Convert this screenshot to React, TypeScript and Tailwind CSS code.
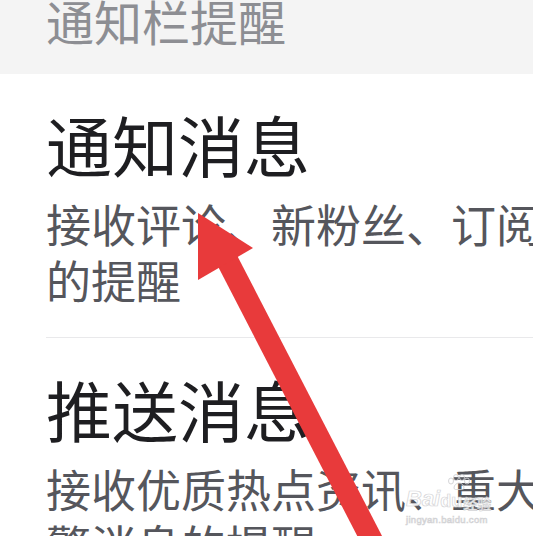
const font = { fontFamily: '"Noto Sans CJK SC", "Noto Sans", sans-serif' };
const latin = { fontFamily: '"Liberation Sans", Arial, sans-serif' };

function Item({ title, lines }: { title: string; lines: string[] }) {
  return (
    <div className="pl-[46px]">
      <div className="text-[66px] leading-none text-[#1e1e21] whitespace-nowrap">{title}</div>
      <div className="mt-[20px] text-[45px] leading-[56px] text-[#55565c]">
        {lines.map((l, i) => (
          <div key={i} className="whitespace-nowrap">
            {l}
          </div>
        ))}
      </div>
    </div>
  );
}

export default function App() {
  return (
    <div className="relative w-[533px] h-[536px] overflow-hidden bg-white" style={font}>
      <div className="h-[74px] bg-[#f4f4f4] pl-[46px] overflow-hidden">
        <div className="-mt-[4px] text-[48px] leading-none text-[#8d8e93] whitespace-nowrap">通知栏提醒</div>
      </div>

      <div className="mt-[36px]">
        <Item title="通知消息" lines={["接收评论、新粉丝、订阅消息", "的提醒"]} />
      </div>

      <div className="ml-[46px] mt-[29px] h-px bg-[#e9e9eb]" />

      <div className="mt-[37px]">
        <Item title="推送消息" lines={["接收优质热点资讯、重大预", "警消息的提醒"]} />
      </div>

      {/* watermark */}
      <div className="absolute left-[406px] top-[474px] w-[96px] text-white [-webkit-text-stroke:0.7px_#cfcfd2] opacity-90">
        <svg className="absolute left-[40px] top-0" width="26" height="16" viewBox="0 0 26 16" fill="none" stroke="#d2d2d5" strokeWidth="1">
          <ellipse cx="5" cy="7" rx="2.5" ry="3" />
          <ellipse cx="10" cy="3.5" rx="2.5" ry="3" />
          <ellipse cx="16" cy="3.5" rx="2.5" ry="3" />
          <ellipse cx="21" cy="7" rx="2.5" ry="3" />
          <path d="M8 14c0-3 2.5-5 5-5s5 2 5 5c0 1.5-2 2-5 1.5C10 16 8 15.5 8 14z" />
        </svg>
        <div className="flex items-end pt-[14px] leading-none">
          <span className="text-[22px] font-bold italic" style={latin}>Bai</span>
          <span className="text-[18px] font-bold" style={latin}>du</span>
          <span className="ml-[1px] text-[14px] font-bold">经验</span>
        </div>
        <div className="mt-[5px] text-[9.5px] leading-none tracking-[0.3px]" style={latin}>
          jingyan.baidu.com
        </div>
      </div>

      {/* red arrow */}
      <svg className="absolute inset-0" width="533" height="536" viewBox="0 0 533 536">
        <line x1="226" y1="258" x2="380" y2="556" stroke="#e83a3b" strokeWidth="22" />
        <polygon points="198,213 253,248 198,280" fill="#e83a3b" />
      </svg>
    </div>
  );
}
